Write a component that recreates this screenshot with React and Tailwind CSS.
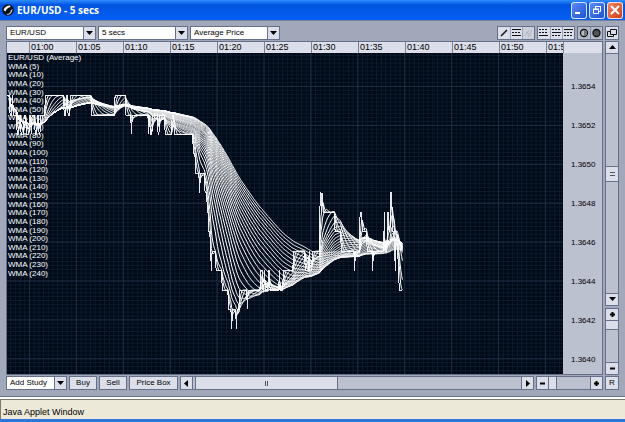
import { useState } from "react";
import { clsx } from "clsx";

const BAR = 0.783; // width of one 5 sec bar
const TOP = 42.5; // y of the highest price level
const STEP = 19.45; // height of one pip
const PERIODS = [5, 10, 20, 30, 40, 50, 60, 70, 80, 90, 100, 110, 120, 130, 140, 150, 160, 170, 180, 190, 200, 210, 220, 230, 240];
const TIMES = ["01:00", "01:05", "01:10", "01:15", "01:20", "01:25", "01:30", "01:35", "01:40", "01:45", "01:50", "01:55"];
const PRICES = ["1.3654", "1.3652", "1.3650", "1.3648", "1.3646", "1.3644", "1.3642", "1.3640"];

// [x where the price starts, pips below the highest level]
const STEPS = [
  [0, 0], [3, 1], [5, 0], [6, 1], [10, 2], [12, 1], [14, 2], [17, 1], [19, 2], [22, 1], [24, 2], [25, 1], [28, 2], [30, 1], [32, 2], [33, 1],
  [38, 0], [57, 1], [59, 0], [61, 1], [63, 0], [84, 1], [108, 0], [119, 1], [124, 2], [125, 1], [141, 2], [142, 1], [143, 2],
  [145, 1], [151, 2], [152, 1], [158, 2], [165, 1], [167, 2], [186, 3], [188, 4], [192, 5], [193, 4], [198, 5], [200, 6], [202, 7],
  [203, 8], [204, 9], [205, 8], [209, 9], [215, 10], [221, 11], [224, 12], [225, 11], [229, 12], [230, 11], [232, 10],
  [240, 11], [241, 10], [253, 9], [256, 10], [257, 9], [258, 10], [261, 9], [263, 10], [272, 9], [273, 10], [276, 9],
  [286, 8], [298, 9], [302, 8], [303, 9], [305, 8], [313, 5], [314, 6], [315, 5], [316, 6], [328, 7], [334, 8], [347, 9],
  [348, 8], [353, 6], [355, 7], [360, 8], [365, 9], [366, 8], [377, 6], [378, 8], [380, 6], [382, 7], [383, 5], [385, 6], [386, 7],
  [387, 8], [388, 9], [389, 7], [390, 8], [391, 9], [392, 10],
];

const bars = [];
for (let x = 0, s = 0; x < 396; x += BAR) {
  while (s + 1 < STEPS.length && STEPS[s + 1][0] <= x) s++;
  bars.push(STEPS[s][1]);
}

function wma(data, period) {
  return data.map((_, i) => {
    const n = Math.min(period, i + 1);
    let sum = 0;
    for (let k = 0; k < n; k++) sum += data[i - k] * (n - k);
    return sum / ((n * (n + 1)) / 2);
  });
}

function toPath(data) {
  return "M" + data.map((v, i) => `${(i * BAR).toFixed(1)} ${(TOP + v * STEP).toFixed(1)}`).join("L");
}

function Chart() {
  return (
    <svg className="block h-full w-full" aria-label="EUR/USD price chart">
      <defs>
        <pattern id="minor" x="22" y="33" width="4.69" height="3.89" patternUnits="userSpaceOnUse">
          <path d="M.5 0V4M0 .5H5" stroke="#0b1a2c" fill="none" />
        </pattern>
        <pattern id="major" x="22" y="33" width="46.9" height="38.9" patternUnits="userSpaceOnUse">
          <path d="M.5 0V39M0 .5H47" stroke="#1e2c40" fill="none" />
        </pattern>
      </defs>
      <rect width="100%" height="100%" fill="#010816" />
      <rect width="100%" height="100%" fill="url(#minor)" />
      <rect width="100%" height="100%" fill="url(#major)" />
      <g fill="none" stroke="#fff" strokeWidth="1">
        <path d={toPath(bars)} stroke="#e4e7ec" shapeRendering="crispEdges" />
        {PERIODS.map((p) => (
          <path key={p} d={toPath(wma(bars, p))} />
        ))}
      </g>
    </svg>
  );
}

function Arrow({ dir }) {
  const shapes = {
    down: "M0 1h7L3.5 5z",
    up: "M0 5h7L3.5 1z",
    left: "M5 0v7L1 3.5z",
    right: "M2 0v7L6 3.5z",
  };
  return (
    <svg width="7" height="7" viewBox="0 0 7 7">
      <path d={shapes[dir]} fill="#000" />
    </svg>
  );
}

function Sign({ plus }) {
  return (
    <svg width="7" height="7" viewBox="0 0 7 7">
      <path d={plus ? "M1 3.5h5M3.5 1v5" : "M1 3.5h5"} stroke="#000" strokeWidth="2" />
    </svg>
  );
}

function SmallButton({ label, className, children }) {
  return (
    <button aria-label={label} className={clsx("flex h-3 w-3 shrink-0 items-center justify-center bg-[#dcdfe9]", className)}>
      {children}
    </button>
  );
}

function TextButton({ className, children }) {
  return (
    <button className={clsx("h-[14px] shrink-0 border border-[#66708a] bg-[#dcdfe9] text-center text-[8px] leading-3", className)}>
      {children}
    </button>
  );
}

function Select({ label, value, options, onChange, className }) {
  return (
    <div className={clsx("relative flex h-[14px] shrink-0 border border-[#66708a] bg-white", className)}>
      <select
        aria-label={label}
        value={value}
        onChange={(e) => onChange(e.target.value)}
        className="w-full appearance-none bg-transparent pl-[3px] text-[8px] leading-3 outline-none"
      >
        {options.map((o) => (
          <option key={o}>{o}</option>
        ))}
      </select>
      <span className="pointer-events-none absolute inset-y-0 right-0 flex w-3 items-center justify-center border-l border-[#66708a] bg-[#dcdfe9]">
        <Arrow dir="down" />
      </span>
    </div>
  );
}

function TitleBar() {
  const base = "flex h-[17px] w-4 items-center justify-center rounded-[3px] border border-white/80";
  return (
    <header className="flex h-5 items-center bg-linear-to-b from-[#2f8cff] via-[#0054e0] via-25% to-[#0560f5] pr-[2px] pl-[2px]">
      <svg width="12" height="12" viewBox="0 0 12 12">
        <circle cx="6" cy="6" r="5.8" fill="#0a0f18" />
        <path d="M1.500 6C2.500 3 5 1.500 8 1.500L8.500 3C6 3.500 4.500 5 3.500 7.500z" fill="#fff" />
        <path d="M4 10c3 0 4-1 5-4l1.500-1c0 3-2 5.500-4.500 6z" fill="#b8c4d4" />
      </svg>
      <h1 className="ml-[3px] font-['Open_Sans',sans-serif] text-[10px] leading-4 font-bold text-white">EUR/USD - 5 secs</h1>
      <div className="ml-auto flex gap-[2px]">
        <button aria-label="Minimize" className={clsx(base, "bg-linear-to-br from-[#5b8cf5] to-[#1f50d0]")}>
          <svg width="14" height="14" viewBox="0 0 14 14">
            <path d="M3 10h5" stroke="#fff" strokeWidth="2" />
          </svg>
        </button>
        <button aria-label="Restore" className={clsx(base, "bg-linear-to-br from-[#5b8cf5] to-[#1f50d0]")}>
          <svg width="14" height="14" viewBox="0 0 14 14" fill="none" stroke="#fff">
            <path d="M5.500 6V3.500h5v5H9M5 3.500h6" />
            <path d="M3.500 6.500h5v4h-5zM3 6h6" />
          </svg>
        </button>
        <button aria-label="Close" className={clsx(base, "bg-linear-to-br from-[#ee8566] to-[#cc3c14]")}>
          <svg width="14" height="14" viewBox="0 0 14 14">
            <path d="M3 3l8 8M11 3l-8 8" stroke="#fff" strokeWidth="2" />
          </svg>
        </button>
      </div>
    </header>
  );
}

function Tool({ label, children, className = "bg-[#dcdfe9]" }) {
  return (
    <button aria-label={label} className={clsx("h-3 w-3", className)}>
      <svg width="12" height="12" viewBox="0 0 12 12" fill="none" stroke="#111">
        {children}
      </svg>
    </button>
  );
}

function Toolbar() {
  const [pair, setPair] = useState("EUR/USD");
  const [interval, setInterval] = useState("5 secs");
  const [price, setPrice] = useState("Average Price");
  const group = "flex border border-[#66708a]";
  const divided = "border-l border-[#9aa2b4] bg-[#dcdfe9]";

  return (
    <div className="flex items-center gap-[2px]">
      <Select label="Currency pair" value={pair} options={["EUR/USD", "USD/JPY", "GBP/USD"]} onChange={setPair} className="w-[90px]" />
      <Select label="Interval" value={interval} options={["5 secs", "10 secs", "1 min"]} onChange={setInterval} className="w-[90px]" />
      <Select label="Price type" value={price} options={["Average Price", "Bid Price", "Ask Price"]} onChange={setPrice} className="w-[90px]" />
      <div className="ml-auto flex gap-[2px]">
        <div className={group}>
          <Tool label="Draw line">
            <path d="M3 9l6-6" strokeWidth="1.4" />
          </Tool>
          <Tool label="Channel" className={divided}>
            <path d="M1 2.500h9M1 8.500h9" />
            <path d="M1 5.500h9" strokeDasharray="2 1" />
          </Tool>
          <Tool label="Clear lines" className="border-l border-[#9aa2b4] bg-[#ccd0da]">
            <path d="M2 9l4-6M5 10l4-7M3 5l5 4" stroke="#b0b5c0" />
          </Tool>
        </div>
        <div className={group}>
          <Tool label="Line at bottom">
            <path d="M1 2.500h9M1 5.500h9" strokeDasharray="2 1" />
            <path d="M1 8.500h9" />
          </Tool>
          <Tool label="Line at middle" className={divided}>
            <path d="M1 2.500h9M1 8.500h9" strokeDasharray="2 1" />
            <path d="M1 5.500h9" />
          </Tool>
          <Tool label="Line at top" className={divided}>
            <path d="M1 2.500h9" />
            <path d="M1 5.500h9M1 8.500h9" strokeDasharray="2 1" />
          </Tool>
        </div>
        <div className={group}>
          <Tool label="Half shade" className="bg-[#b4bac8]">
            <circle cx="6" cy="6" r="3.500" strokeWidth="1.300" />
            <path d="M6 3a3 3 0 010 6z" fill="#777" stroke="none" />
          </Tool>
          <Tool label="Full shade" className="border-l border-[#7d869b] bg-[#b4bac8]">
            <circle cx="5.500" cy="6" r="3.500" fill="#555" strokeWidth="1.300" />
          </Tool>
        </div>
        <div className={group}>
          <Tool label="Detach window">
            <path d="M4.500 2.500h6v5h-6z" />
            <path d="M4 4.500H1.500v5h6V8" />
          </Tool>
        </div>
      </div>
    </div>
  );
}

function VerticalBars() {
  return (
    <div className="flex w-[14px] shrink-0 flex-col gap-[2px]">
      {/* Price scroll */}
      <div className="flex flex-1 flex-col border border-[#66708a] bg-[#bcc1d0]">
        <SmallButton label="Scroll up" className="border-b border-[#66708a]">
          <Arrow dir="up" />
        </SmallButton>
        <div className="flex flex-1 flex-col justify-center">
          <div className="flex h-4 flex-col items-center justify-center gap-[2px] border-y border-[#66708a] bg-[#dcdfe9]">
            <span className="h-px w-[5px] bg-[#555]" />
            <span className="h-px w-[5px] bg-[#555]" />
          </div>
        </div>
        <SmallButton label="Scroll down" className="border-t border-[#66708a]">
          <Arrow dir="down" />
        </SmallButton>
      </div>
      {/* Price zoom */}
      <div className="flex h-[67px] flex-col border border-[#66708a] bg-[#bcc1d0]">
        <SmallButton label="Zoom price in" className="border-b border-[#66708a]">
          <Sign plus />
        </SmallButton>
        <div className="h-[9px] border-b border-[#66708a] bg-[#dcdfe9]" />
        <SmallButton label="Zoom price out" className="mt-auto border-t border-[#66708a]">
          <Sign />
        </SmallButton>
      </div>
    </div>
  );
}

function BottomBar() {
  const track = "flex h-[14px] border border-[#66708a] bg-[#bcc1d0]";
  return (
    <div className="flex gap-[2px]">
      <Select label="Add study" value="Add Study" options={["Add Study"]} onChange={() => {}} className="w-[61px]" />
      <TextButton className="w-7">Buy</TextButton>
      <TextButton className="w-7">Sell</TextButton>
      <TextButton className="w-[49px]">Price Box</TextButton>
      <div className={clsx(track, "min-w-0 flex-1")}>
        <SmallButton label="Scroll left" className="border-r border-[#66708a]">
          <Arrow dir="left" />
        </SmallButton>
        <div className="flex-1 pl-[2px]">
          <div className="flex h-3 w-[44%] items-center justify-center gap-px border-x border-[#66708a] bg-[#dcdfe9]">
            <span className="h-[5px] w-px bg-[#555]" />
            <span className="h-[5px] w-px bg-[#555]" />
          </div>
        </div>
        <SmallButton label="Scroll right" className="border-l border-[#66708a]">
          <Arrow dir="right" />
        </SmallButton>
      </div>
      <div className={clsx(track, "w-[67px]")}>
        <SmallButton label="Zoom time out" className="border-r border-[#66708a]">
          <Sign />
        </SmallButton>
        <div className="w-2 border-r border-[#66708a] bg-[#dcdfe9]" />
        <SmallButton label="Zoom time in" className="ml-auto border-l border-[#66708a]">
          <Sign plus />
        </SmallButton>
      </div>
      <TextButton className="w-[14px]">R</TextButton>
    </div>
  );
}

export default function App() {
  return (
    <div className="flex min-h-screen flex-col bg-[#a0a8ba] font-['Liberation_Sans',Arial,sans-serif] text-[8px] text-black">
      <TitleBar />

      <main className="flex flex-1 flex-col border-t border-[#77829c] px-[6px] pt-[5px] pb-[6px]">
        <Toolbar />

        <div className="mt-px mb-px flex flex-1 gap-[2px]">
          <div className="flex min-w-0 flex-1 flex-col border border-[#66708a]">
            {/* Time axis */}
            <div className="flex h-[11px] bg-[#dcdfe9]">
              <div className="flex min-w-0 flex-1 overflow-hidden pl-[22px]">
                {TIMES.map((t) => (
                  <span key={t} className="w-[47px] shrink-0 border-l border-[#77829c] pl-px text-[9px] leading-[11px]">
                    {t}
                  </span>
                ))}
              </div>
              <div className="w-[39px] shrink-0 border-l border-[#77829c]" />
            </div>

            <div className="flex min-h-[320px] flex-1">
              <div className="relative min-w-0 flex-1 overflow-hidden bg-[#010816]">
                <div className="absolute inset-0">
                  <Chart />
                </div>
                {/* Study legend, over the chart */}
                <ul className="absolute top-px left-px flex h-[224px] flex-col justify-between text-[8px] leading-[8px] text-white">
                  <li>EUR/USD (Average)</li>
                  {PERIODS.map((p) => (
                    <li key={p}>WMA ({p})</li>
                  ))}
                </ul>
              </div>
              {/* Price axis */}
              <div className="w-[39px] shrink-0 bg-[#bcc1d0] pt-[14px] pl-[8px]">
                {PRICES.map((p) => (
                  <div key={p} className="h-[39px] text-[8px] leading-[39px] last:h-[30px]">
                    {p}
                  </div>
                ))}
              </div>
            </div>
          </div>
          <VerticalBars />
        </div>

        <BottomBar />
      </main>

      <footer className="border-t border-[#6d7486] bg-white pt-[2px]">
        <div className="h-5 border-t border-l border-[#7c7a70] bg-[#ece9d8] pt-[7px] pl-[2px] text-[9px] leading-[11px]">Java Applet Window</div>
        <div className="h-[3px] bg-[#2f74d8]" />
      </footer>
    </div>
  );
}
